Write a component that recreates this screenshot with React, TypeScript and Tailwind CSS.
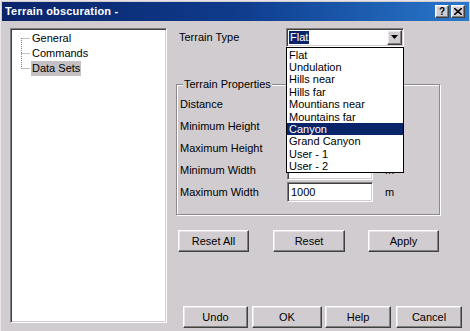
import React from "react";

const raised =
  "border border-t-white border-l-white border-r-[#404040] border-b-[#404040] shadow-[inset_-1px_-1px_0_#808080,inset_1px_1px_0_#e8e4e8]";

function Btn({ label, w }: { label: string; w: string }) {
  return (
    <div className={`${w} h-[22px] flex items-center justify-center bg-[#d0ccd0] text-black ${raised}`}>
      {label}
    </div>
  );
}

const sunken =
  "border border-t-[#808080] border-l-[#808080] border-r-white border-b-white shadow-[inset_1px_1px_0_#404040,inset_-1px_-1px_0_#d0ccd0]";

export default function App() {
  const options = [
    "Flat",
    "Undulation",
    "Hills near",
    "Hills far",
    "Mountians near",
    "Mountains far",
    "Canyon",
    "Grand Canyon",
    "User - 1",
    "User - 2",
  ];
  const rows = ["Distance", "Minimum Height", "Maximum Height", "Minimum Width", "Maximum Width"];
  return (
    <div
      className="w-[470px] h-[331px] bg-[#d0ccd0] overflow-hidden text-[11px] text-black flex flex-col border-l border-t border-l-[#e8e4e8] border-t-[#e8e4e8]"
      style={{ fontFamily: '"Liberation Sans", Arial, sans-serif' }}
    >
      {/* Title bar */}
      <div className="h-[19px] mx-[1px] mt-[1px] flex items-center justify-between bg-gradient-to-r from-[#0a246a] via-[#0f3b8c] to-[#2a78cc] pl-[3px] pr-[4px]">
        <span className="text-white font-bold text-[11px] tracking-[0.2px]">Terrain obscuration -</span>
        <div className="flex gap-[2px]">
          <div className={`w-[14px] h-[13px] flex items-center justify-center bg-[#d0ccd0] text-[10px] font-bold leading-none ${raised}`}>?</div>
          <div className={`w-[14px] h-[13px] flex items-center justify-center bg-[#d0ccd0] ${raised}`}>
            <svg width="8" height="7" viewBox="0 0 8 7">
              <path d="M0 0 L8 7 M8 0 L0 7" stroke="black" strokeWidth="1.6" />
            </svg>
          </div>
        </div>
      </div>

      {/* Body */}
      <div className="flex pl-[9px] pt-[7px]">
        {/* Tree */}
        <div className={`relative w-[157px] h-[295px] bg-white ${sunken}`}>
          <svg className="absolute left-0 top-0" width="40" height="80">
            <path d="M10.5 9 V39.5 M10.5 9.5 H19 M10.5 24.5 H19 M10.5 39.5 H19" stroke="#808080" strokeWidth="1" strokeDasharray="1 1" fill="none" />
          </svg>
          <div className="flex flex-col pl-[20px] pt-[2px] leading-[15px]">
            <span className="px-[1px]">General</span>
            <span className="px-[1px]">Commands</span>
            <span className="px-[1px] bg-[#c4c0c4] self-start">Data Sets</span>
          </div>
        </div>

        {/* Right column */}
        <div className="ml-[9px] flex flex-col w-[286px]">
          {/* Terrain type row */}
          <div className="flex items-center h-[18px]">
            <span className="w-[110px] pl-[3px]">Terrain Type</span>
            <div className="relative">
              <div className={`w-[118px] h-[19px] bg-white flex items-center justify-between pl-[2px] pr-[1px] ${sunken}`}>
                <span className="bg-[#0a246a] text-white px-[1px] leading-[13px]">Flat</span>
                <div className={`w-[15px] h-[15px] bg-[#d0ccd0] flex items-center justify-center ${raised}`}>
                  <svg width="7" height="4" viewBox="0 0 7 4">
                    <path d="M0 0 H7 L3.5 4 Z" fill="black" />
                  </svg>
                </div>
              </div>
              {/* Dropdown list */}
              <div className="absolute left-0 top-[19px] w-[118px] h-[126px] bg-white border border-black z-10 flex flex-col pt-[1px] leading-[12.4px]">
                {options.map((o) => (
                  <div
                    key={o}
                    className={o === "Canyon" ? "bg-[#0a246a] text-white pl-[2px]" : "pl-[2px]"}
                  >
                    {o}
                  </div>
                ))}
              </div>
            </div>
          </div>

          {/* Group box */}
          <div className="relative mt-[38px] w-[264px] h-[131px] border border-[#8c888c] shadow-[1px_1px_0_white,inset_1px_1px_0_white] pt-[8px] pl-[3px]">
            <span className="absolute -top-[7px] left-[6px] bg-[#d0ccd0] px-[1px] leading-[13px]">Terrain Properties</span>
            {rows.map((r) => (
              <div key={r} className="flex items-center h-[22px]">
                <span className="w-[107px]">{r}</span>
                <div className={`w-[86px] h-[20px] bg-white flex items-center pl-[3px] ${sunken}`}>
                  {r === "Maximum Width" ? "1000" : ""}
                </div>
                <span className="ml-[12px]">m</span>
              </div>
            ))}
          </div>

          {/* Buttons row */}
          <div className="flex mt-[15px] pl-[2px]">
            <Btn label="Reset All" w="w-[71px]" />
            <div className="w-[24px]" />
            <Btn label="Reset" w="w-[72px]" />
            <div className="w-[23px]" />
            <Btn label="Apply" w="w-[71px]" />
          </div>

          {/* Bottom row */}
          <div className="flex mt-[54px] pl-[7px]">
            <Btn label="Undo" w="w-[65px]" />
            <div className="w-[4px]" />
            <Btn label="OK" w="w-[70px]" />
            <div className="w-[3px]" />
            <Btn label="Help" w="w-[66px]" />
            <div className="w-[5px]" />
            <Btn label="Cancel" w="w-[66px]" />
          </div>
        </div>
      </div>
    </div>
  );
}
